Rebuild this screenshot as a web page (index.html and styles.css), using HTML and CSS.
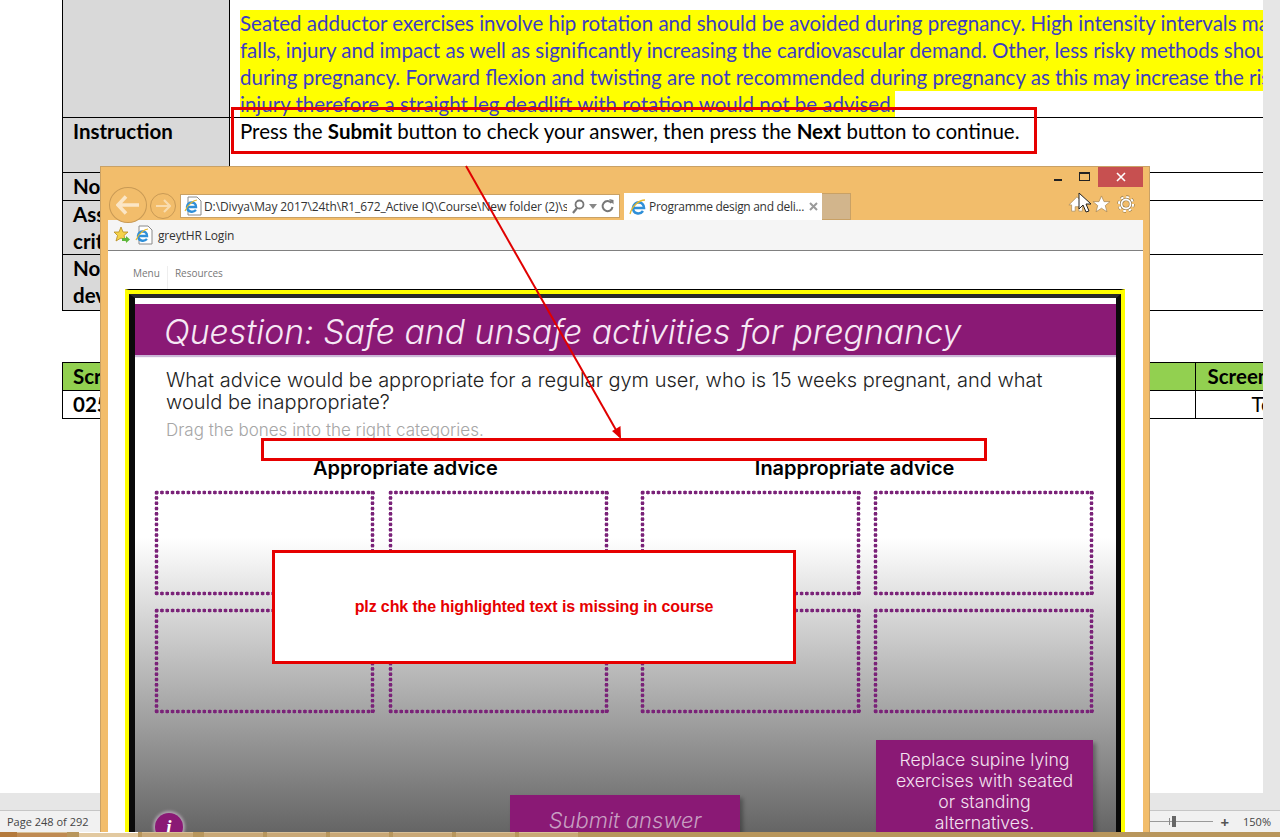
FILE: index.html
```html
<!DOCTYPE html>
<html lang="en">
<head>
    <meta charset="UTF-8">
    <meta name="viewport" content="width=device-width, initial-scale=1.0">
    <title>Review screenshot</title>
    <link rel="stylesheet" href="styles.css">
</head>
<body>
    <div class="word-main">
        <div class="doc-page">
            <table class="spec-table">
                <colgroup><col class="col-label"><col></colgroup>
                <tr class="row-feedback">
                    <td class="label"></td>
                    <td class="feedback">
                        <span class="hl">Seated adductor exercises involve hip rotation and should be avoided during pregnancy. High intensity intervals may increase the risk of</span><br>
                        <span class="hl">falls, injury and impact as well as significantly increasing the cardiovascular demand. Other, less risky methods should be used</span><br>
                        <span class="hl">during pregnancy. Forward flexion and twisting are not recommended during pregnancy as this may increase the risk of</span><br>
                        <span class="hl hl-last">injury therefore a straight leg deadlift with rotation would not be advised.</span>
                    </td>
                </tr>
                <tr class="row-instruction">
                    <td class="label">Instruction</td>
                    <td>Press the <b>Submit</b> button to check your answer, then press the <b>Next</b> button to continue.</td>
                </tr>
                <tr class="row-notes">
                    <td class="label">Notes</td>
                    <td></td>
                </tr>
                <tr class="row-double">
                    <td class="label">Assessment<br>criteria</td>
                    <td></td>
                </tr>
                <tr class="row-double row-last">
                    <td class="label">Notes for<br>developers</td>
                    <td></td>
                </tr>
            </table>

            <table class="screen-table">
                <colgroup><col class="col-main"><col class="col-last"></colgroup>
                <tr class="screen-head">
                    <td>Screen</td>
                    <td class="screen-last">Screen type</td>
                </tr>
                <tr class="screen-row">
                    <td>025</td>
                    <td class="screen-type">Text</td>
                </tr>
            </table>
        </div>
        <div class="scrollbar"></div>
    </div>
    <div class="status-gap"></div>
    <div class="status-bar">
        <span class="page-count">Page 248 of 292</span>
        <div class="zoom-control">
            <span class="zoom-track"><i class="zoom-tick"></i><i class="zoom-thumb"></i></span>
            <span class="zoom-plus">+</span>
            <span class="zoom-level">150%</span>
        </div>
    </div>
    <div class="taskbar">
        <i class="task task-1"></i><i class="task task-2 active"></i><i class="task task-3"></i><i class="task task-2"></i><i class="task task-2"></i><i class="task task-2"></i><i class="task task-2"></i><i class="task task-2"></i><i class="task task-2 last"></i>
    </div>

    <!-- browser window floating over the document -->
    <div class="browser">
        <div class="win-controls">
            <span class="win-min"></span>
            <span class="win-max"></span>
            <span class="win-close">
                <svg width="10" height="10" viewBox="0 0 10 10"><path d="M1 1l8 8M9 1l-8 8" stroke="#fff" stroke-width="1.6"/></svg>
            </span>
        </div>
        <div class="nav-row">
            <span class="nav-back">
                <svg width="24" height="20" viewBox="0 0 24 20"><path d="M10 1.500L2 10l8 8.500M3 10h20" fill="none" stroke="#fbe6c6" stroke-width="3.600"/></svg>
            </span>
            <span class="nav-forward">
                <svg width="16" height="14" viewBox="0 0 16 14"><path d="M9 1l6 6-6 6M14 7H1" fill="none" stroke="#f9dcae" stroke-width="2.200"/></svg>
            </span>
            <div class="address-bar">
                <svg class="ie-page" width="18" height="20" viewBox="0 0 18 20"><path d="M4 1h9l4 4v14H4z" fill="#fff" stroke="#8a8a8a"/><path d="M2 11h10c0-6-8-6-9 0 0 5 6 6 9 3" fill="none" stroke="#2f8fd8" stroke-width="2.400"/><path d="M1 15C4 8 10 4 13 4" fill="none" stroke="#e8b92c" stroke-width="1.200"/></svg>
                <span class="address-text">D:\Divya\May 2017\24th\R1_672_Active IQ\Course\New folder (2)\story_html5.html</span>
                <svg class="addr-icon" width="14" height="15" viewBox="0 0 14 15"><circle cx="8.500" cy="5.500" r="4" fill="none" stroke="#777" stroke-width="1.800"/><path d="M6 9l-4 5" stroke="#777" stroke-width="2.200"/></svg>
                <svg class="addr-icon" width="8" height="5" viewBox="0 0 8 5"><path d="M0 0h8L4 5z" fill="#888"/></svg>
                <svg class="addr-icon" width="13" height="14" viewBox="0 0 13 14"><path d="M10.500 4A5 5 0 1 0 11.500 8" fill="none" stroke="#777" stroke-width="2"/><path d="M8 0l4.500 1v4.500z" fill="#777"/></svg>
            </div>
            <div class="tab">
                <svg width="18" height="18" viewBox="0 0 18 18"><path d="M3 10h12c0-7-10-8-11 0 0 6 7 7 10 3" fill="none" stroke="#2f8fd8" stroke-width="2.600"/><path d="M1 16C3 8 10 2 16 2" fill="none" stroke="#e8b92c" stroke-width="1.300"/></svg>
                <span class="tab-title">Programme design and deli...</span>
                <svg class="tab-close" width="9" height="9" viewBox="0 0 9 9"><path d="M1 1l7 7M8 1L1 8" stroke="#9a9a9a" stroke-width="2"/></svg>
            </div>
            <span class="tab-new"></span>
            <div class="tool-icons">
                <svg width="18" height="18" viewBox="0 0 20 18"><path d="M10 1L1 10h3v7h4v-5h4v5h4v-7h3z" fill="#fff" stroke="#a98a58" stroke-width=".8"/></svg>
                <svg width="19" height="18" viewBox="0 0 20 19"><path d="M10 1l2.700 6h6.300l-5 4.200 1.800 6.600L10 14l-5.800 3.800L6 11.200 1 7h6.300z" fill="#fff" stroke="#a98a58" stroke-width=".8"/></svg>
                <svg width="18" height="18" viewBox="0 0 18 18"><circle cx="9" cy="9" r="7" fill="none" stroke="#8f7444" stroke-width="3.400" stroke-dasharray="2.800 2.700"/><circle cx="9" cy="9" r="7" fill="none" stroke="#fff" stroke-width="2.200" stroke-dasharray="2.800 2.700"/><circle cx="9" cy="9" r="4.500" fill="none" stroke="#8f7444" stroke-width="3"/><circle cx="9" cy="9" r="4.500" fill="none" stroke="#fff" stroke-width="1.800"/></svg>
            </div>
        </div>
        <div class="browser-body">
            <div class="fav-bar">
                <svg width="18" height="18" viewBox="0 0 18 18"><path d="M8 1l2 5h5l-4 3.500 1.500 5.500L8 12l-5 3 1.500-5.500L1 6h5z" fill="#f4d24a" stroke="#b58a1e" stroke-width=".8"/><path d="M9 12h4v-2l4 3.500-4 3.500v-2H9z" fill="#5cb83a"/></svg>
                <svg class="fav-page" width="18" height="20" viewBox="0 0 18 20"><path d="M4 1h9l4 4v14H4z" fill="#fff" stroke="#8a8a8a"/><path d="M2 11h10c0-6-8-6-9 0 0 5 6 6 9 3" fill="none" stroke="#2f8fd8" stroke-width="2.400"/><path d="M1 15C4 8 10 4 13 4" fill="none" stroke="#e8b92c" stroke-width="1.200"/></svg>
                <span>greytHR Login</span>
            </div>
            <div class="player-menu">
                <span>Menu</span>
                <span class="menu-sep">Resources</span>
            </div>
            <div class="player-frame">
                <div class="slide">
                    <div class="slide-title">Question: Safe and unsafe activities for pregnancy</div>
                    <p class="slide-question">What advice would be appropriate for a regular gym user, who is 15 weeks pregnant, and what<br>would be inappropriate?</p>
                    <p class="slide-hint">Drag the bones into the right categories.</p>
                    <div class="col-heads">
                        <span class="head-left">Appropriate advice</span>
                        <span class="head-right">Inappropriate advice</span>
                    </div>
                    <div class="drop-areas">
                        <div class="drop-group">
                            <div class="drop"></div><div class="drop"></div><div class="drop"></div><div class="drop"></div>
                        </div>
                        <div class="drop-group drop-group-right">
                            <div class="drop"></div><div class="drop"></div><div class="drop"></div><div class="drop"></div>
                        </div>
                    </div>
                    <div class="slide-bottom">
                        <span class="info-btn">i</span>
                        <div class="submit-btn">Submit answer</div>
                        <div class="bone-tile">Replace supine lying exercises with seated or standing alternatives.</div>
                    </div>
                </div>
            </div>
        </div>
    </div>

    <!-- review annotations -->
    <svg class="cursor" width="14" height="22" viewBox="0 0 14 22"><path d="M1 1v16l4-4 3 7 3-1-3-7h5z" fill="#fff" stroke="#222"/></svg>
    <div class="callout callout-instruction"></div>
    <div class="callout callout-hint"></div>
    <svg class="arrow" width="170" height="290" viewBox="0 0 170 290"><path d="M1 1L155 272" stroke="#e00000" stroke-width="2"/><path d="M156 274l-9-8 4.500-2.500 4-2.500z" fill="#e00000"/></svg>
    <div class="comment-box">plz chk the highlighted text is missing in course</div>
</body>
</html>
```

FILE: styles.css
```css
* {
    box-sizing: border-box;
}
body {
    margin: 0;
    height: 837px;
    overflow: hidden;
    position: relative;
    background-color: #fff;
    font-family: "Lato", sans-serif;
    color: #000;
}

/* word document behind */
.word-main {
    display: flex;
    height: 793px;
}
.doc-page {
    flex: 1;
    overflow: hidden;
    padding-left: 62px;
    background-color: #fff;
}
.scrollbar {
    width: 17px;
    background-color: #e6e6e6;
}
.spec-table,
.screen-table {
    border-collapse: collapse;
    table-layout: fixed;
    width: 1201px;
    font-size: 20.500px;
    line-height: 27px;
}
.spec-table td,
.screen-table td {
    border: 1px solid #000;
    border-right: none;
    vertical-align: top;
    padding: 0 10px;
}
.col-label {
    width: 167px;
}
.label {
    background-color: #d9d9d9;
    font-weight: bold;
}
.row-feedback td {
    height: 116px;
    border-top: none;
}
.spec-table .feedback {
    padding: 10px 0 0 10px;
    white-space: nowrap;
    overflow: hidden;
    color: #3c3cc4;
    line-height: 0;
}
.hl {
    display: inline-block;
    height: 27px;
    line-height: 27px;
    background-color: #ff0;
    vertical-align: top;
}
/* last line runs into the row border */
.hl-last {
    height: 26px;
}
.row-instruction td {
    height: 55px;
}
.row-notes td {
    height: 28px;
}
.row-double td {
    height: 54px;
    line-height: 26.500px;
}
.row-last td {
    height: 56px;
}
.screen-table {
    margin-top: 51px;
}
.col-last {
    width: 68px;
}
.screen-head td {
    height: 28px;
    background-color: #92d050;
    font-weight: bold;
    white-space: nowrap;
}
.screen-table .screen-last {
    padding-left: 12px;
}
.screen-row td {
    height: 28px;
    font-weight: bold;
}
.screen-table .screen-type {
    font-weight: normal;
    padding-left: 56px;
    white-space: nowrap;
}

/* status and taskbar */
.status-gap {
    height: 17px;
    background-color: #e6e6e6;
}
.status-bar {
    height: 22px;
    background-color: #f1f1f1;
    border-top: 1px solid #c6c6c6;
    display: flex;
    align-items: center;
    justify-content: space-between;
    padding: 0 9px 0 7px;
    font-family: "Open Sans", sans-serif;
    font-size: 11px;
    color: #444;
}
.zoom-control {
    display: flex;
    align-items: center;
    gap: 7px;
}
.zoom-track {
    display: block;
    width: 68px;
    height: 1px;
    background-color: #999;
    position: relative;
}
.zoom-tick {
    position: absolute;
    left: 24px;
    top: -3px;
    width: 1px;
    height: 7px;
    background-color: #888;
}
.zoom-thumb {
    position: absolute;
    left: 27px;
    top: -5px;
    width: 4px;
    height: 11px;
    background-color: #666;
}
.zoom-plus {
    font-size: 15px;
    font-weight: bold;
    color: #555;
    margin-right: 7px;
    line-height: 12px;
}
.taskbar {
    height: 5px;
    background-color: #b8965c;
    display: flex;
    position: relative;
    z-index: 5;
    padding-left: 17px;
    box-shadow: inset 17px 0 0 #b47a3c;
}
.task {
    height: 5px;
    margin-right: 4px;
    background-color: #c9a877;
    border-top: 1px solid #d8bf96;
}
.task-1 {
    width: 50px;
    margin-right: 12px;
    background-color: #bf8a52;
}
.task-2 {
    width: 59px;
}
.task-3 {
    width: 51px;
    margin-right: 11px;
}
.task.active {
    background-color: #e2c9a0;
    border-top-color: #fff;
}

/* browser window */
.browser {
    position: absolute;
    left: 100px;
    top: 166px;
    width: 1050px;
    height: 666px;
    background-color: #f2bd6b;
    border: 1px solid #c9a165;
    border-bottom: none;
    overflow: hidden;
    display: flex;
    flex-direction: column;
}
.win-controls {
    height: 26px;
    display: flex;
    justify-content: flex-end;
    padding-right: 6px;
}
.win-min {
    width: 8px;
    height: 2px;
    background-color: #222;
    margin: 12px 17px 0 0;
}
.win-max {
    width: 11px;
    height: 9px;
    border: 1px solid #222;
    border-top-width: 2px;
    margin: 5px 8px 0 0;
}
.win-close {
    width: 45px;
    height: 20px;
    background-color: #c75050;
    display: flex;
    align-items: center;
    justify-content: center;
}
.nav-row {
    height: 27px;
    display: flex;
    align-items: flex-start;
    padding-left: 8px;
    position: relative;
    z-index: 2;
}
.nav-back {
    width: 38px;
    height: 36px;
    margin-top: -6px;
    border: 1px solid #c99a55;
    border-radius: 50%;
    display: flex;
    align-items: center;
    justify-content: center;
    background-color: #f2bd6b;
}
.nav-forward {
    width: 26px;
    height: 26px;
    margin: 0 4px 0 3px;
    border: 1px solid #c99a55;
    border-radius: 50%;
    display: flex;
    align-items: center;
    justify-content: center;
}
.address-bar {
    width: 440px;
    height: 24px;
    margin-top: 1px;
    background-color: #fff;
    border: 1px solid #c9a165;
    display: flex;
    align-items: center;
    padding: 0 5px 0 3px;
    gap: 4px;
    font-family: "Open Sans", sans-serif;
    font-size: 12px;
    color: #333;
}
.ie-page {
    flex: none;
    margin-right: -2px;
}
.address-text {
    flex: 1;
    min-width: 0;
    overflow: hidden;
    white-space: nowrap;
    letter-spacing: -0.1px;
}
.addr-icon {
    flex: none;
}
.tab {
    width: 198px;
    height: 27px;
    margin-left: 4px;
    background-color: #fff;
    display: flex;
    align-items: center;
    padding: 0 4px 0 5px;
    gap: 2px;
    font-family: "Open Sans", sans-serif;
    font-size: 12px;
    color: #333;
}
.tab-title {
    flex: 1;
    white-space: nowrap;
    overflow: hidden;
    letter-spacing: -0.3px;
}
.tab-new {
    width: 29px;
    height: 27px;
    background-color: #d2b58c;
    border: 1px solid #c9a165;
    border-left: none;
}
.tool-icons {
    margin-left: auto;
    margin-right: 14px;
    display: flex;
    align-items: center;
    gap: 6px;
    height: 22px;
}
.browser-body {
    flex: 1;
    margin: 0 6px 0 7px;
    background-color: #fff;
    display: flex;
    flex-direction: column;
    min-height: 0;
}
.fav-bar {
    height: 31px;
    background-color: #f5f5f5;
    border-bottom: 1px solid #808080;
    display: flex;
    align-items: center;
    padding-left: 5px;
    gap: 4px;
    font-family: "Open Sans", sans-serif;
    font-size: 12px;
    color: #333;
}
.fav-bar span {
    margin-left: 1px;
    letter-spacing: -0.15px;
}
.player-menu {
    height: 38px;
    padding: 15px 0 0 25px;
    display: flex;
    font-family: "Open Sans", sans-serif;
    font-size: 10px;
    line-height: 14px;
    color: #777;
}
.menu-sep {
    margin-left: 7px;
    padding-left: 7px;
    border-left: 1px solid #eee;
}
.player-frame {
    margin: 0 18px 0 17px;
    border-top: 1px solid #000;
    border-left: 4px solid #ff0;
    border-right: 4px solid #ff0;
    flex: 1;
    min-height: 0;
    background-color: #ff0;
    padding-top: 4px;
}
.slide {
    height: 100%;
    border: solid #0a0a0a;
    border-width: 4px 5px 0 6px;
    border-top-color: #2a2a2a;
    background: linear-gradient(#fff 0, #fff 240px, #666 532px);
    padding-top: 6px;
    overflow: hidden;
    font-family: "Inter", sans-serif;
}
.slide-title {
    height: 51px;
    background-color: #8a1975;
    box-shadow: 0 2px 1px #c9b7d6;
    color: #f6e8f4;
    font-size: 33.800px;
    font-weight: 300;
    font-style: italic;
    line-height: 56px;
    padding-left: 29px;
    white-space: nowrap;
}
.slide-question {
    margin: 14px 0 0 31px;
    font-size: 20px;
    line-height: 22px;
    font-weight: 300;
    color: #222;
    white-space: nowrap;
}
.slide-hint {
    margin: 7px 0 0 31px;
    font-size: 17px;
    line-height: 20px;
    font-weight: 300;
    color: #a6a6a6;
}
.col-heads {
    height: 30px;
    margin-top: 13px;
    display: flex;
    font-weight: 600;
    font-size: 20px;
    line-height: 30px;
    color: #000;
}
.head-left {
    margin-left: 178px;
}
.head-right {
    margin-left: 257px;
}
.drop-areas {
    display: flex;
    gap: 31px;
    margin: 7px 0 0 19px;
}
.drop-group {
    display: grid;
    grid-template-columns: 221px 221px;
    grid-template-rows: 106px 106px;
    column-gap: 13px;
    row-gap: 12px;
}
.drop-group-right {
    column-gap: 12px;
}
/* tight round dots, border: dotted spaces them too wide */
.drop {
    border-radius: 4px;
    background:
        radial-gradient(circle, #7a2278 1.700px, transparent 2.200px) 0 0 / 5.300px 5px repeat-x,
        radial-gradient(circle, #7a2278 1.700px, transparent 2.200px) 0 100% / 5.300px 5px repeat-x,
        radial-gradient(circle, #7a2278 1.700px, transparent 2.200px) 0 0 / 5px 5.300px repeat-y,
        radial-gradient(circle, #7a2278 1.700px, transparent 2.200px) 100% 0 / 5px 5.300px repeat-y;
}
.slide-bottom {
    display: flex;
    align-items: flex-start;
    margin-top: 26px;
    padding-left: 20px;
}
.info-btn {
    width: 28px;
    height: 28px;
    margin-top: 73px;
    border-radius: 50%;
    background-color: #8a1975;
    box-shadow: 0 0 3px 2px #b0a4b0;
    color: #fff;
    font-family: "Liberation Serif", serif;
    font-weight: bold;
    font-style: italic;
    font-size: 19px;
    line-height: 28px;
    text-align: center;
}
.submit-btn {
    width: 230px;
    height: 60px;
    margin: 55px 0 0 327px;
    background-color: #8a1975;
    box-shadow: 3px 3px 4px rgba(0, 0, 0, 0.3);
    color: #c79fc2;
    font-style: italic;
    font-weight: 300;
    font-size: 22px;
    line-height: 50px;
    text-align: center;
}
.bone-tile {
    width: 217px;
    height: 110px;
    margin-left: 136px;
    padding: 9px 14px;
    background-color: #8a1975;
    box-shadow: 3px 3px 4px rgba(0, 0, 0, 0.3);
    color: #f3e1f0;
    font-weight: 300;
    font-size: 17.700px;
    line-height: 21px;
    text-align: center;
}

/* annotations */
.cursor {
    position: absolute;
    left: 1078px;
    top: 192px;
    z-index: 4;
}
.callout {
    position: absolute;
    border: 3px solid #e60000;
    z-index: 3;
}
.callout-instruction {
    left: 231px;
    top: 107px;
    width: 806px;
    height: 47px;
}
.callout-hint {
    left: 261px;
    top: 438px;
    width: 726px;
    height: 23px;
}
.arrow {
    position: absolute;
    left: 465px;
    top: 165px;
    z-index: 3;
}
.comment-box {
    position: absolute;
    left: 272px;
    top: 550px;
    width: 524px;
    height: 114px;
    z-index: 3;
    background-color: #fff;
    border: 3px solid #e60000;
    color: #e60000;
    font-family: "Liberation Sans", sans-serif;
    font-weight: bold;
    font-size: 16px;
    letter-spacing: -0.12px;
    display: flex;
    align-items: center;
    justify-content: center;
}
```
